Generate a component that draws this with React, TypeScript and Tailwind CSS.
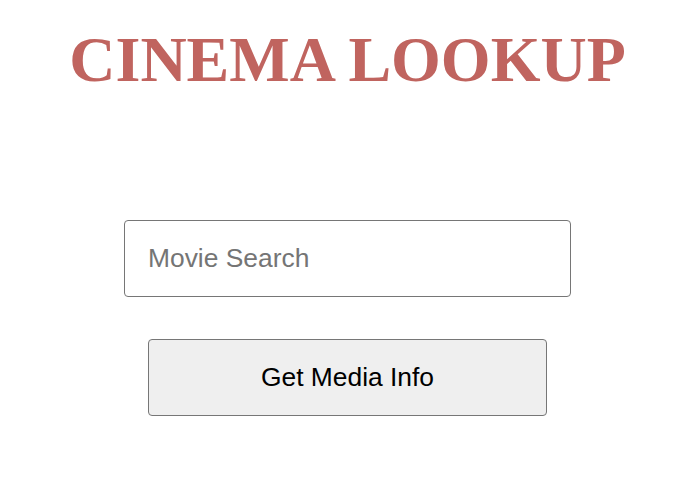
export default function App() {
  return (
    <div className="w-[695px] h-[480px] bg-white flex flex-col items-center">
      <h1 className="mt-[28px] text-[64px] leading-[64px] font-bold text-[#c0645f] font-['Liberation_Serif','Times_New_Roman',serif]">
        CINEMA LOOKUP
      </h1>
      <input
        type="text"
        placeholder="Movie Search"
        className="mt-[128px] w-[447px] h-[77px] border border-[#767676] rounded-[4px] px-[23px] text-[26.4px] text-black placeholder:text-[#757575] outline-none font-['Liberation_Sans',Arial,sans-serif]"
      />
      <button className="mt-[42px] w-[399px] h-[77px] border border-[#767676] rounded-[4px] bg-[#efefef] text-[26.4px] text-black font-['Liberation_Sans',Arial,sans-serif]">
        Get Media Info
      </button>
    </div>
  );
}
